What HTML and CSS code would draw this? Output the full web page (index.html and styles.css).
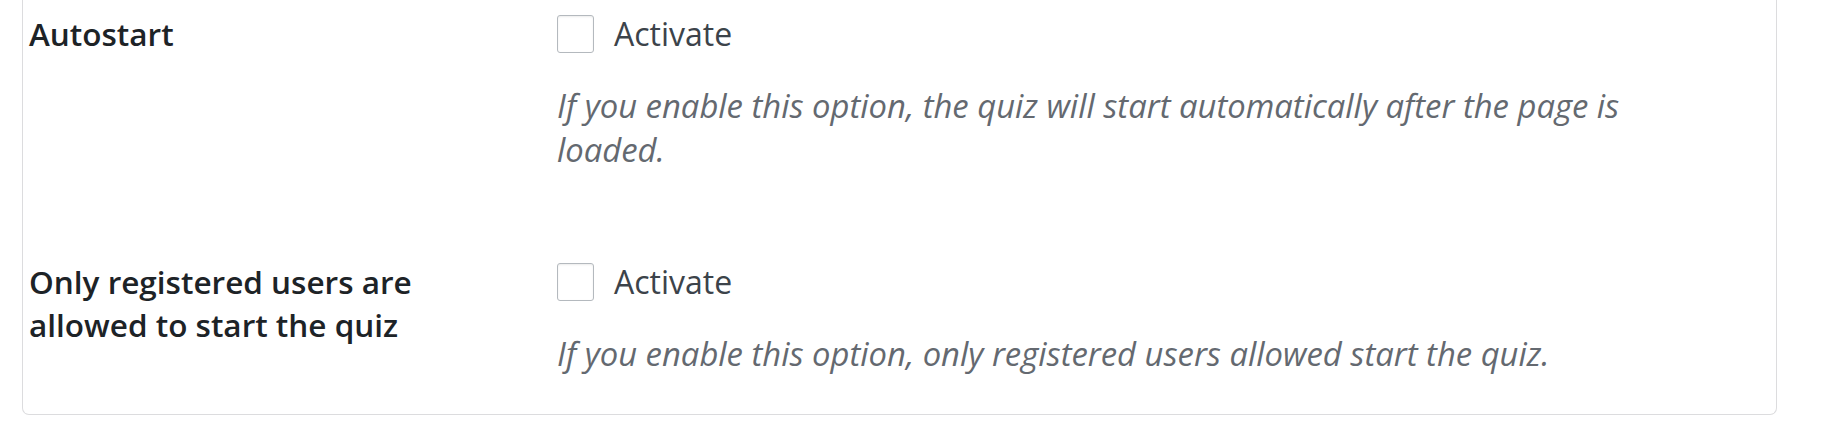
FILE: index.html
```html
<!DOCTYPE html>
<html lang="en">
<head>
<meta charset="utf-8">
<title>Quiz settings</title>
<link rel="stylesheet" href="styles.css">
</head>
<body>
<div class="card">
  <div class="row">
    <div class="label">Autostart</div>
    <div class="field">
      <label class="check"><span class="box"></span><span class="check-text">Activate</span></label>
      <p class="desc">If you enable this option, the quiz will start automatically after the page is loaded.</p>
    </div>
  </div>
  <div class="row row-next">
    <div class="label">Only registered users are allowed to start the quiz</div>
    <div class="field">
      <label class="check"><span class="box"></span><span class="check-text">Activate</span></label>
      <p class="desc">If you enable this option, only registered users allowed start the quiz.</p>
    </div>
  </div>
</div>
</body>
</html>
```

FILE: styles.css
```css
html, body {
  margin: 0;
  padding: 0;
  background: #ffffff;
}

body {
  font-family: "Open Sans", "Noto Sans", sans-serif;
}

.card {
  box-sizing: border-box;
  margin-left: 22px;
  width: 1755px;
  border: 1px solid #dcdcde;
  border-top: none;
  border-radius: 0 0 7px 7px;
  padding: 12px 0 38px 6px;
  background: #ffffff;
}

.row {
  display: grid;
  grid-template-columns: 528px 1fr;
}

.row-next {
  margin-top: 88px;
}

.label {
  font-size: 31.5px;
  font-weight: 600;
  line-height: 43px;
  color: #1d2327;
  width: 420px;
}

.check {
  display: flex;
  align-items: center;
  gap: 20px;
  height: 43px;
}

.box {
  box-sizing: border-box;
  width: 37px;
  height: 38px;
  border: 1.5px solid #b4b9be;
  border-radius: 3px;
  background: #ffffff;
  box-shadow: inset 0 1px 2px rgba(0, 0, 0, 0.08);
}

.check-text {
  font-size: 32px;
  line-height: 43px;
  color: #3c434a;
}

.desc {
  margin: 29px 0 0;
  max-width: 1100px;
  font-size: 32.8px;
  line-height: 44px;
  font-style: italic;
  color: #646970;
}
```
